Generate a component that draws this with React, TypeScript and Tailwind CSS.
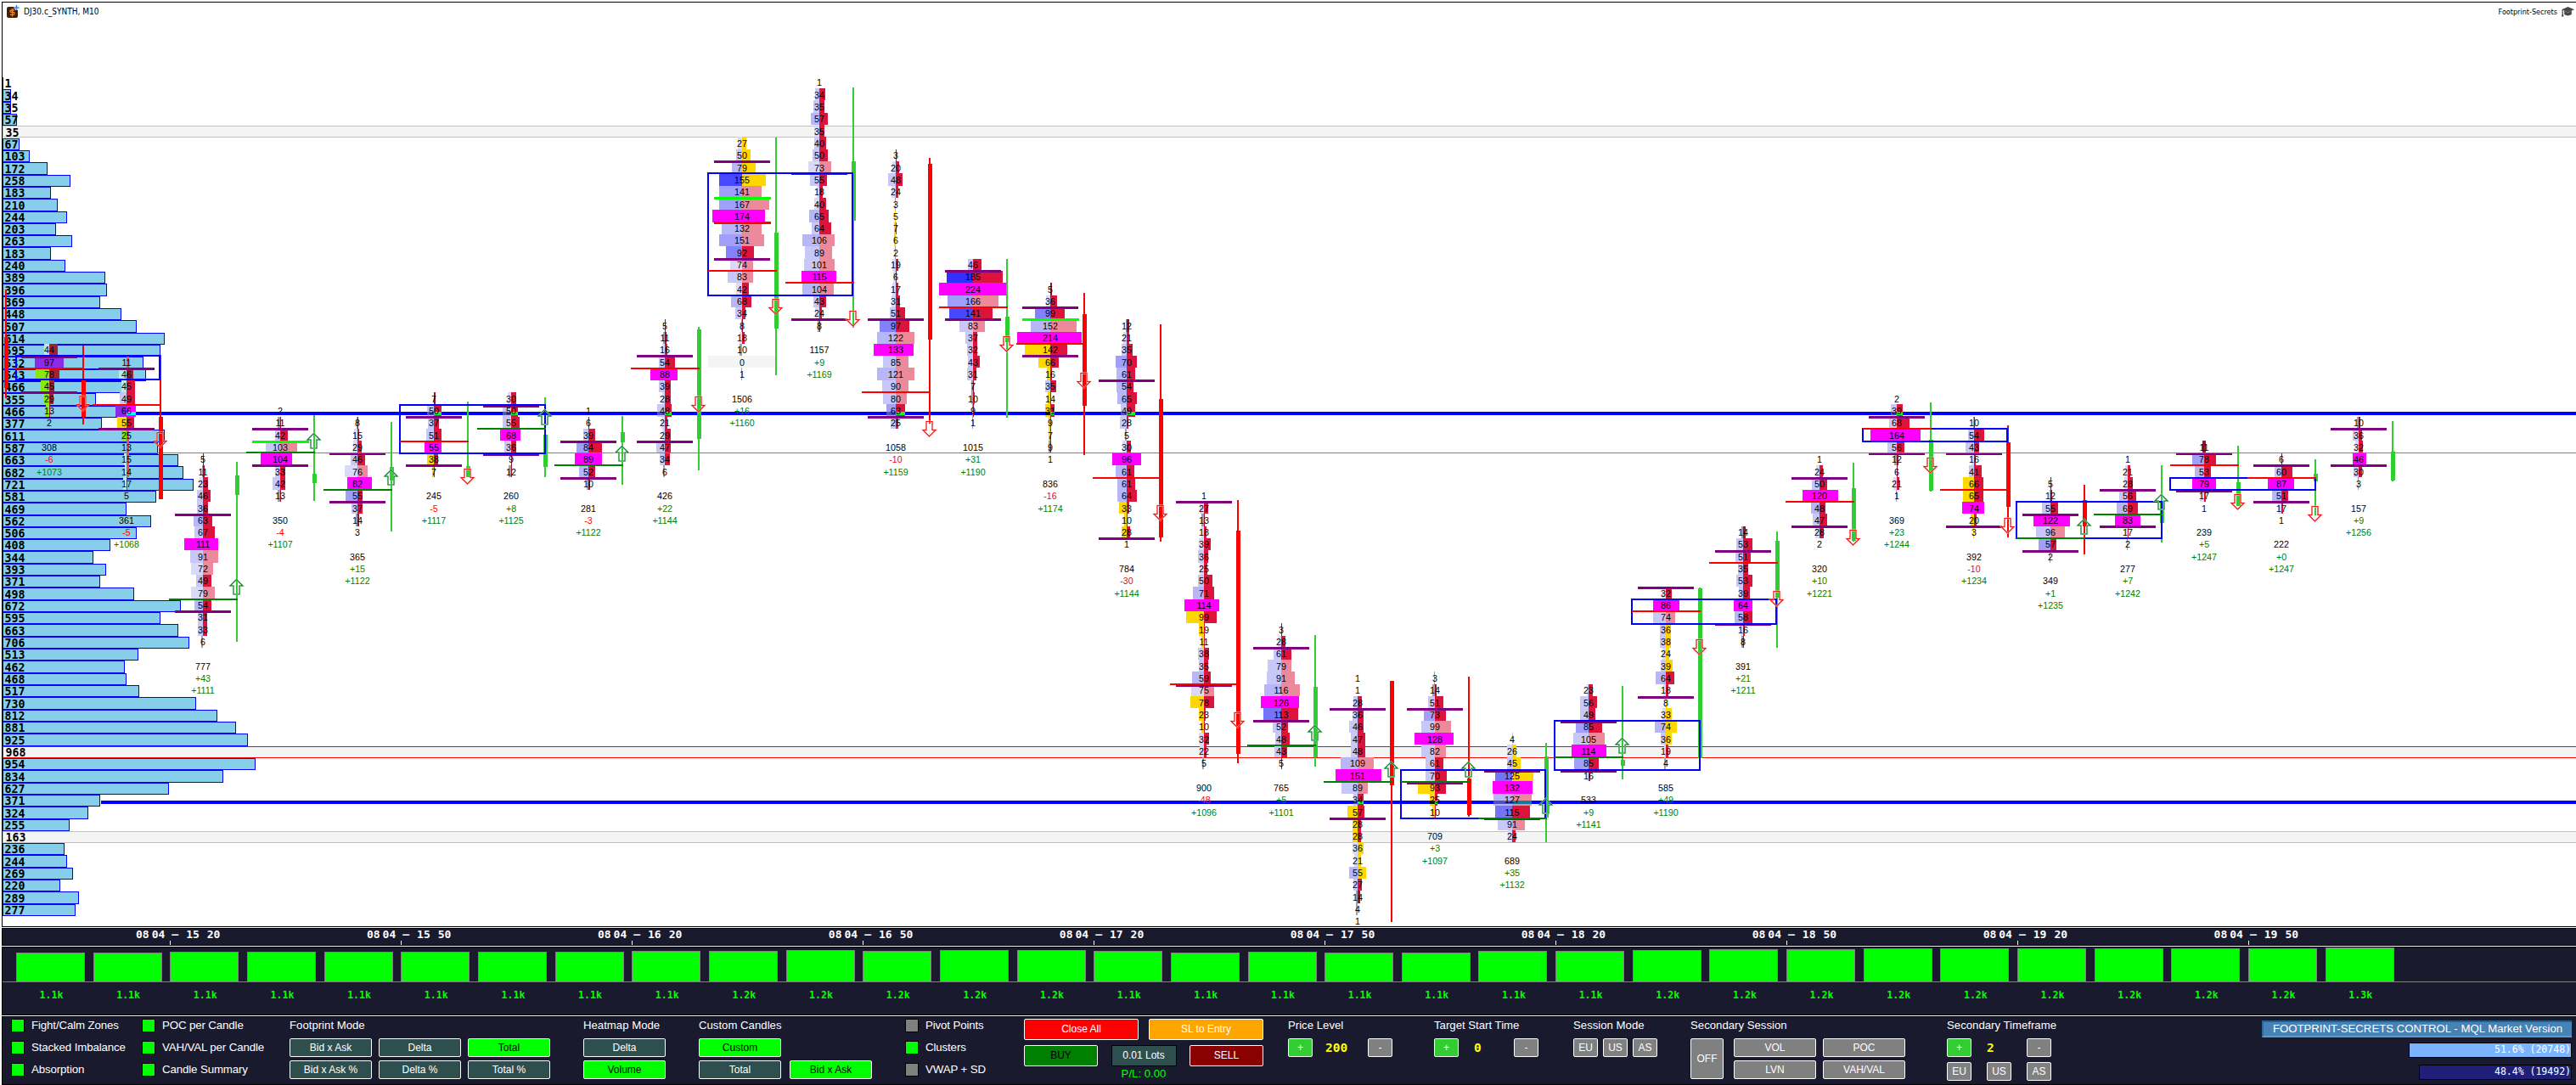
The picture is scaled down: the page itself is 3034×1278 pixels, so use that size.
import React from "react";

const ROW = 14.32;
const rowTop = (i: number) => Math.round(91 + i * ROW);
const cellTop = (i: number) => Math.round(89.8 + i * ROW);
const textY = (i: number) => 101.3 + i * ROW;
const colX = (n: number) => Math.round(58 + n * 90.66);

const PROFILE = [
  1, 34, 35, 57, 35, 67, 103, 172, 258, 183, 210, 244, 203, 263, 183, 240, 389, 396, 369, 448, 507, 614, 595, 532, 543,
  466, 355, 466, 377, 611, 587, 663, 682, 721, 581, 469, 562, 506, 408, 344, 393, 371, 498, 672, 595, 663, 706, 513,
  462, 468, 517, 730, 812, 881, 925, 968, 954, 834, 627, 371, 324, 255, 163, 236, 244, 269, 220, 289, 277,
];

const BANDS: Record<number, string> = { 4: "#c0c0c0", 55: "#ff0000", 62: "#c0c0c0" };

const PALETTE: Record<string, string> = {
  a: "#dadaf8",
  b: "#c8c8f8",
  c: "#b6b6f8",
  d: "#a0a0fa",
  e: "#8282fb",
  f: "#7474fb",
  B: "#4848ff",
  H: "#3030ff",
  g: "#a0a0a8",
  y: "#ffd700",
  r: "#dc143c",
  p: "#ec8a9c",
  k: "#9b1030",
  M: "#ff00ff",
  L: "#86e80f",
  w: "#a02430",
  P: "#8a2be8",
  C: "#b4ece8",
  o: "#ef4a50",
};

type Column = {
  start: number;
  cells: string;
  total: string;
  delta: string;
  cum: string;
  wick: [number, number];
  body: [number, number];
  up: boolean;
  arrow?: [string, number];
  va: number[];
  poc?: [string, number];
  extra?: [string, number][];
};

const COLUMNS: Column[] = [
  { start: 22, cells: "44 6C 10w|97 17P 17P|78 16L 12w|45 10L 6w|29 6L 5w|13 4L 1w|2", total: "308", delta: "-6", cum: "+1073", wick: [407, 500], body: [448, 491], up: false, arrow: ["d", 466], va: [420, 462], poc: ["r", 434] },
  { start: 23, cells: "11 0a 3o|46 9C 8w|45 6C 10r|49 8b 10r|66 13P 11M|55 11y 9r|25 6L 3o|13 0a 3o|15 3C 3o|14 2C 3o|17 4C 1w|5", total: "361", delta: "-5", cum: "+1068", wick: [418, 587], body: [491, 588], up: false, arrow: ["d", 509], va: [434, 505], poc: ["r", 477] },
  { start: 31, cells: "5 0a 1k|11 1g 2k|23 4a 6r|46 7b 9r|36 7b 6r|63 11c 11r|67 10b 14r|111 22M 18M|91 15b 18p|72 14a 12p|49 8b 10r|79 14a 14p|54 10c 10r|31 6b 5r|33 6b 5r|6 2g 0r", total: "777", delta: "+43", cum: "+1111", wick: [544, 756], body: [560, 583], up: true, arrow: ["u", 682], va: [606, 720], poc: ["g", 706] },
  { start: 27, cells: "2|11 3g 1k|42 6b 9r|103 17b 20p|104 23M 14M|33 6b 6r|42 9b 6r|13 3g 1k", total: "350", delta: "-4", cum: "+1107", wick: [489, 590], body: [558, 569], up: true, arrow: ["u", 510], va: [505, 548], poc: ["g", 533], extra: [["#00ff00", 520]] },
  { start: 28, cells: "8 1g 1k|15 4a 2r|29 5a 5r|46 8b 9r|76 15a 12p|82 12M 17M|55 14d 6r|37 7b 6r|14 2g 2k|3", total: "365", delta: "+15", cum: "+1122", wick: [497, 626], body: [550, 566], up: true, arrow: ["u", 553], va: [534, 591], poc: ["g", 577] },
  { start: 26, cells: "7 0a 2k|50 8b 9r|37 7b 6r|51 9b 9r|55 11M 9M|38 8y 5r|7 2y 1r", total: "245", delta: "-5", cum: "+1117", wick: [473, 562], body: [549, 562], up: true, arrow: ["d", 552], va: [491, 548], poc: ["r", 520] },
  { start: 26, cells: "30 4a 6r|50 10b 8r|55 10b 10r|68 13M 11M|36 8b 6r|9 0a 1k|12 3g 1k", total: "260", delta: "+8", cum: "+1125", wick: [468, 562], body: [512, 550], up: true, arrow: ["u", 482], va: [478, 535], poc: ["g", 505] },
  { start: 27, cells: "1|6 0a 1k|39 6b 8r|84 14d 16r|89 16M 16M|52 11c 8r|10 2g 2k", total: "281", delta: "-3", cum: "+1122", wick: [490, 571], body: [509, 521], up: true, arrow: ["u", 525], va: [520, 563], poc: ["g", 548] },
  { start: 20, cells: "5 0a 1k|11 2g 2k|16 3a 3r|54 7b 12r|88 17M 15M|39 7b 7r|28 3a 7r|48 9b 8r|21 4a 3r|29 3a 7r|47 10b 7r|34 6b 6r|6 2g 0r", total: "426", delta: "+22", cum: "+1144", wick: [385, 554], body: [388, 517], up: true, arrow: ["d", 467], va: [419, 520], poc: ["r", 434] },
  { start: 5, cells: "27 5a 5y|50 7b 10y|79 12c 16y|155 27B 28y|141 27d 23p|167 27d 32p|174 35M 27M|132 24c 23p|151 27d 26p|92 19e 14r|74 14a 13p|83 17b 13p|42 7a 8r|68 13c 11r|34 8b 4r|8 1g 1k|18 3a 3r|10 3g 0r|0|1 1g 0r", total: "1506", delta: "+16", cum: "+1160", wick: [162, 442], body: [274, 387], up: true, arrow: ["d", 352], va: [190, 305], poc: ["r", 319], extra: [["#00ff00", 233], ["#ff0000", 262]] },
  { start: 0, cells: "1|34 5b 7r|35 7b 6r|57 10c 10r|35 6a 6r|40 6b 8r|50 8b 10r|73 13a 14p|55 11b 9r|18 3a 4r|40 6a 8r|65 12c 11r|64 9b 14r|106 20c 18p|89 17b 15p|101 18b 18p|115 21M 20M|104 20c 17p|43 7b 8r|24 5a 3r|8 2g 1k", total: "1157", delta: "+9", cum: "+1169", wick: [103, 386], body: [190, 260], up: true, arrow: ["d", 366], va: [204, 376], poc: ["r", 333] },
  { start: 6, cells: "3 0a 1k|20 4a 4r|48 9b 8r|24 5a 3r|3 1g 0r|5 1y 0r|7 2y 1r|6 2y 0r|2 1g 0r|19 4a 3r|6 3a 1k|17 4a 3r|31 5a 5r|51 7b 11r|97 19e 16r|122 22c 22p|133 26M 21M|85 15b 15p|121 22c 22p|90 16b 15p|80 15b 13p|63 11d 11r|25 6b 3r", total: "1058", delta: "-10", cum: "+1159", wick: [186, 499], body: [193, 400], up: false, arrow: ["d", 496], va: [376, 491], poc: ["r", 462] },
  { start: 15, cells: "46 6b 10r|185 31H 35r|224 40M 39M|166 30d 30p|141 28B 23r|83 16b 14p|37 9b 5r|32 7b 5r|43 6b 8r|31 7b 4r|7 2g 1k|10 2g 2r|9 1g 1k|1 1g 0r", total: "1015", delta: "+31", cum: "+1190", wick: [305, 492], body: [373, 403], up: true, arrow: ["d", 396], va: [319, 376], poc: ["r", 362] },
  { start: 17, cells: "5 0a 2k|36 5a 8r|99 18e 17r|152 23c 31p|214 39M 37M|142 30y 20r|66 14y 10r|16 4y 2r|35 6b 7r|14 3y 1k|31 6y 5r|9 2y 1r|7 2y 1k|9 2g 1k|1", total: "836", delta: "-16", cum: "+1174", wick: [345, 536], body: [370, 478], up: false, arrow: ["d", 439], va: [362, 419], poc: ["r", 405], extra: [["#00ff00", 376]] },
  { start: 20, cells: "12 1g 3k|21 4a 3r|35 6b 7r|70 13d 12r|61 12c 10r|54 12c 8r|65 11c 12r|49 7b 10r|28 8b 2r|5 2g 0r|30 5a 5r|96 17M 17M|61 13c 9r|61 11c 10r|64 11c 12r|33 9y 3r|10 3y 1r|28 6y 4r|1", total: "784", delta: "-30", cum: "+1144", wick: [382, 638], body: [470, 633], up: false, arrow: ["d", 595], va: [448, 634], poc: ["r", 563] },
  { start: 34, cells: "1|27 5a 5r|13 3g 1k|18 3a 3r|39 6a 8r|36 7b 5r|25 5a 4r|50 7b 10r|71 13c 12r|114 23M 18M|99 21y 15r|19 6y 1r|11 3y 1r|38 7b 6r|35 6b 5r|59 14c 8r|75 15a 12p|78 16y 12r|23 6y 2r|10 3y 1r|32 6a 6r|22 5a 3r|5 2g 0r", total: "900", delta: "-48", cum: "+1096", wick: [589, 899], body: [625, 888], up: false, arrow: ["d", 839], va: [591, 807], poc: ["r", 806] },
  { start: 45, cells: "3 0a 1k|28 4a 5r|61 9b 12r|79 16b 12p|91 17b 16p|116 20c 22p|126 24M 21M|113 21f 20r|52 10b 8r|48 7b 10r|43 8b 7r|5 0a 1k", total: "765", delta: "+5", cum: "+1101", wick: [748, 903], body: [809, 892], up: true, arrow: ["u", 854], va: [763, 849], poc: ["g", 878] },
  { start: 49, cells: "1|1|28 5b 5r|36 6b 7r|46 10b 7r|47 8b 9r|48 8b 9r|109 20c 19p|151 26M 28M|89 19b 12p|34 5b 7r|57 12y 8r|28 6y 4r|28 6y 4r|36 6a 7y|21 4a 4y|55 10c 10y|27 5b 5r|14 2g 3k|4 2g 0r|1", total: "", delta: "", cum: "", wick: [803, 1086], body: [802, 925], up: false, arrow: ["u", 897], va: [835, 964], poc: ["g", 921] },
  { start: 49, cells: "3 1g 0r|14 3g 2k|51 8b 10r|73 13d 13r|99 16b 19p|128 24M 22M|82 16b 13p|61 11b 10r|70 11b 14r|93 20y 13r|25 6y 3r|10 3y 1r", total: "709", delta: "+3", cum: "+1097", wick: [797, 962], body: [917, 960], up: false, arrow: ["u", 897], va: [835, 922], poc: ["g", 921] },
  { start: 54, cells: "4 0a 1y|26 6a 5y|45 6b 10y|125 20f 25y|132 23M 24M|127 22c 23p|115 20f 21r|91 17b 15p|24 5a 4r", total: "689", delta: "+35", cum: "+1132", wick: [875, 992], body: [891, 963], up: true, arrow: ["u", 940], va: [908, 964], poc: ["g", 964] },
  { start: 50, cells: "23 2a 5r|56 10b 10r|49 10b 8r|85 15d 16r|105 18b 19p|114 20M 21M|85 17d 12r|16 2a 2r", total: "533", delta: "+9", cum: "+1141", wick: [808, 918], body: [895, 902], up: true, arrow: ["u", 869], va: [850, 908], poc: ["g", 892] },
  { start: 42, cells: "32 4a 7r|86 15M 16M|74 15b 11p|36 7b 6y|38 7b 6y|24 4a 4y|39 6b 8y|64 12c 10r|18 3a 3r|8 1a 1y|33 4a 7y|74 13c 13y|36 6b 7y|19 2a 3r|4 2g 0r", total: "585", delta: "+49", cum: "+1190", wick: [692, 893], body: [693, 893], up: true, arrow: ["d", 753], va: [692, 821], poc: ["r", 720] },
  { start: 37, cells: "14 2g 3k|53 8b 11r|51 9b 9r|35 6b 6r|53 8b 11r|39 5b 8r|64 11M 11M|58 10c 11r|16 3a 2r|8 2g 1k", total: "391", delta: "+21", cum: "+1211", wick: [626, 763], body: [637, 704], up: true, arrow: ["d", 696], va: [649, 735], poc: ["r", 663] },
  { start: 31, cells: "1|24 4a 4r|50 9b 9r|120 20M 22M|48 10c 7r|47 8b 9r|28 5a 5r|2", total: "320", delta: "+10", cum: "+1221", wick: [545, 638], body: [575, 637], up: true, arrow: ["d", 624], va: [563, 620], poc: ["r", 591] },
  { start: 26, cells: "2|39 7b 7r|68 9b 15r|164 31M 28M|56 11b 9r|12 3g 2k|6 0a 1k|21 4a 3r|1 1g 0r", total: "369", delta: "+23", cum: "+1244", wick: [474, 579], body: [518, 578], up: true, arrow: ["d", 539], va: [491, 534], poc: ["r", 505] },
  { start: 28, cells: "10 1g 1k|54 7b 12r|43 10b 6r|16 3a 2r|41 6b 9r|66 13y 11r|65 13y 11r|74 14M 12M|20 4y 3r|3 1y 0r", total: "392", delta: "-10", cum: "+1234", wick: [501, 633], body: [521, 597], up: false, arrow: ["d", 610], va: [534, 620], poc: ["r", 577] },
  { start: 33, cells: "5 0a 1k|12 1g 2k|55 10b 9r|122 20M 23M|96 17b 17p|57 14d 7r|2 1g 0r", total: "349", delta: "+1", cum: "+1235", wick: [571, 653], body: [589, 620], up: false, arrow: ["u", 611], va: [606, 649], poc: ["g", 634] },
  { start: 31, cells: "1|21 3a 3r|28 4a 6r|56 10b 10r|69 13c 12r|83 15M 15M|17 3a 1r|2 1g 0r", total: "277", delta: "+7", cum: "+1242", wick: [548, 639], body: [590, 616], up: true, arrow: ["u", 582], va: [577, 620], poc: ["g", 606] },
  { start: 30, cells: "11 2k 2k|78 14d 14r|53 11c 8r|79 14M 14M|17 5a 2r|1", total: "239", delta: "+5", cum: "+1247", wick: [525, 596], body: [568, 596], up: true, arrow: ["d", 582], va: [534, 578], poc: ["r", 548] },
  { start: 31, cells: "6 0a 1k|60 8b 13r|87 16M 15M|51 11c 8r|17 4a 2r|1", total: "222", delta: "+0", cum: "+1247", wick: [541, 607], body: [558, 567], up: true, arrow: ["d", 596], va: [548, 591], poc: ["r", 563] },
  { start: 28, cells: "10 2g 2k|36 7b 4r|32 4a 5r|46 7M 9M|30 6b 4r|3 1g 0r", total: "157", delta: "+9", cum: "+1256", wick: [496, 567], body: [532, 566], up: true, va: [505, 548] },
];

const ZONES: [number, number, number, number][] = [
  [18, 418, 189, 448],
  [470, 476, 643, 535],
  [833, 203, 1005, 349],
  [1649, 906, 1821, 965],
  [1830, 848, 2003, 908],
  [1921, 705, 2093, 736],
  [2193, 504, 2365, 521],
  [2374, 590, 2547, 635],
  [2555, 562, 2728, 578],
];

const SUPPORT: Record<number, number> = { 27: 485, 59: 943 };
const overlayFor = (code: string) => {
  if (code === "r") return "#23eb3c";
  if (code === "p") return "#137a99";
  if (code === "y") return "#1a1a08";
  if (code === "M") return "#00ffff";
  if (code === "w" || code === "k" || code === "g" || code === "P" || code === "L") return "";
  return "#5050c8";
};

const num = "[font-family:'Liberation_Sans',Arial,sans-serif] text-[10.7px]";

function Footprint({ col, n }: { col: Column; n: number }) {
  const c = colX(n);
  const rows = col.cells.split("|").map((s) => s.split(" "));
  const end = col.start + rows.length + 1;
  return (
    <g>
      {rows.map(([v, l, r], k) => {
        const i = col.start + k;
        const y = cellTop(i);
        const h = cellTop(i + 1) - y;
        const lw = l ? parseInt(l) : 0;
        const rw = r ? parseInt(r) : 0;
        const lc = l ? l.slice(-1) : "";
        const rc = r ? r.slice(-1) : "";
        const s = SUPPORT[i];
        return (
          <g key={k}>
            {v === "0" && <rect x={c - 40} y={y} width={79} height={h} fill="#f4f4f4" />}
            {lw > 0 && <rect x={c - lw} y={y} width={lw} height={h} fill={PALETTE[lc]} />}
            {rw > 0 && <rect x={c} y={y} width={rw} height={h} fill={PALETTE[rc]} />}
            {s && lw > 0 && overlayFor(lc) && <rect x={c - lw} y={s} width={lw} height={4} fill={overlayFor(lc)} />}
            {s && rw > 1 && overlayFor(rc) && <rect x={c} y={s} width={rw} height={4} fill={overlayFor(rc)} />}
          </g>
        );
      })}
      <g className={num} textAnchor="middle">
        {rows.map(([v], k) => (
          <text key={k} x={c} y={textY(col.start + k)}>
            {v}
          </text>
        ))}
        <text x={c} y={textY(end)}>
          {col.total}
        </text>
        <text x={c} y={textY(end + 1)} fill={col.delta.startsWith("-") ? "#ff0000" : "#008000"}>
          {col.delta}
        </text>
        <text x={c} y={textY(end + 2)} fill="#008000">
          {col.cum}
        </text>
      </g>
      {col.va.map((y) => (
        <rect key={y} x={c - 33} y={y - 1} width={66} height={3} rx={1} fill="#800080" />
      ))}
      {col.extra?.map(([f, y]) => (
        <rect key={y} x={c - 33} y={y - 1} width={67} height={3} rx={1} fill={f} />
      ))}
    </g>
  );
}

function Candle({ x, wick, body, up }: { x: number; wick: [number, number]; body: [number, number]; up: boolean }) {
  const f = up ? "#32cd32" : "#ff0000";
  return (
    <g fill={f}>
      <rect x={x - 1} y={wick[0]} width={2} height={wick[1] - wick[0]} />
      <rect x={x - 2} y={body[0]} width={5} height={body[1] - body[0]} />
    </g>
  );
}

function Arrow({ x, y, dir }: { x: number; y: number; dir: string }) {
  const d = "M-3.5 .5H3.5V10.5H7.5L0 18L-7.5 10.5H-3.5Z";
  const up = dir === "u";
  return (
    <g transform={up ? `translate(${x} ${y + 18.5}) scale(1 -1)` : `translate(${x} ${y})`} fill="none">
      <path d={d} stroke={up ? "#b8e8d8" : "#ffc8c0"} strokeWidth={1.8} />
      <path d={d} stroke={up ? "#0f7f1a" : "#f01818"} strokeWidth={1.1} />
    </g>
  );
}

function Chart() {
  return (
    <svg viewBox="3 3 3031 1088" width={3031} height={1088} shapeRendering="crispEdges" className="absolute left-0 top-0">
      {Object.entries(BANDS).map(([k, s]) => {
        const i = Number(k);
        return <rect key={k} x={3.5} y={rowTop(i) + 0.5} width={3040} height={13} fill="#f4f4f4" stroke={s} />;
      })}
      {PROFILE.map((v, i) => {
        if (BANDS[i]) return null;
        const w = Math.max(1, Math.round(v * 0.313 - 0.7));
        const h = rowTop(i + 1) - rowTop(i);
        if (w < 3) return <rect key={i} x={3} y={rowTop(i)} width={1} height={h} fill="#0000ff" />;
        return <rect key={i} x={3.5} y={rowTop(i) + 0.5} width={w - 1} height={h - 1} fill="#87ceeb" stroke="#0000ff" />;
      })}
      <g className="text-[13.2px] font-bold [font-family:'DejaVu_Sans_Mono','Liberation_Mono',monospace]">
        {PROFILE.map((v, i) => (
          <text key={i} x={BANDS[i] ? 6.5 : 5.5} y={103.3 + i * 14.32}>
            {v}
          </text>
        ))}
      </g>
      <rect x={158} y={485} width={2876} height={4} fill="#0000ff" />
      <rect x={119} y={943} width={2915} height={4} fill="#0000ff" />
      <rect x={52} y={405} width={6} height={3} fill="#1d3ff0" />
      <rect x={58} y={405} width={10} height={3} fill="#22dd55" />
      {COLUMNS.map((c, n) => (
        <Footprint key={n} col={c} n={n} />
      ))}
      <rect x={3} y={533} width={3031} height={1} fill="#808080" />
      <Candle x={7} wick={[341, 469]} body={[397, 457]} up={false} />
      {COLUMNS.map((c, n) => (
        <Candle key={n} x={colX(n) + 40} wick={c.wick} body={c.body} up={c.up} />
      ))}
      {ZONES.map(([a, b, c, d]) => (
        <rect key={a} x={a + 1} y={b + 1} width={c - a - 2} height={d - b - 2} fill="none" stroke="#0000ff" strokeWidth={2} />
      ))}
      {COLUMNS.map((c, n) =>
        c.poc ? (
          <rect key={n} x={colX(n) - 40} y={c.poc[1] - 1} width={81} height={2} fill={c.poc[0] === "r" ? "#ff0000" : "#008000"} />
        ) : null
      )}
      <g shapeRendering="auto">
        {COLUMNS.map((c, n) => (c.arrow ? <Arrow key={n} x={colX(n) + 39.5} y={c.arrow[1]} dir={c.arrow[0]} /> : null))}
      </g>
    </svg>
  );
}

function TimeAxis() {
  const times = ["15 20", "15 50", "16 20", "16 50", "17 20", "17 50", "18 20", "18 50", "19 20", "19 50"];
  return (
    <div className="ml-[2px] flex h-[21px] shrink-0 border-y border-l border-black bg-[#1a1a2e] pl-[157px] text-[13px] font-bold text-white [font-family:'DejaVu_Sans_Mono',monospace]">
      {times.map((t) => {
        const [h, m] = t.split(" ");
        return (
          <div key={t} className="flex h-[19px] w-[271.96px] shrink-0 flex-col justify-between">
            <div className="flex h-[14px] items-center leading-[14px]">
              <span>08</span>
              <span className="ml-[3px]">04</span>
              <span className="ml-[8px]">–</span>
              <span className="ml-[9px]">{h}</span>
              <span className="ml-[9px]">{m}</span>
            </div>
            <div className="ml-[40px] h-[5px] w-px bg-white" />
          </div>
        );
      })}
    </div>
  );
}

const VOL = [35, 35, 36, 36, 36, 36, 36, 36, 37, 37, 38, 37, 38, 38, 37, 35, 36, 35, 35, 37, 37, 38, 39, 39, 40, 40, 40, 40, 40, 40, 41];

function VolumePanel() {
  const label = (i: number) => (i === 30 ? "1.3k" : (i > 8 && i < 14) || i > 20 ? "1.2k" : "1.1k");
  return (
    <div className="ml-[2px] h-[81px] shrink-0 border-y border-l border-black bg-[#1a1a2e]">
      <div className="flex h-[41px] items-end border-b border-[#808080] pl-[16px]">
        {VOL.map((h, i) => (
          <div key={i} className="w-[90.66px] shrink-0">
            <div className="w-[81px] border-x border-t border-[#808080] bg-[#00ff00]" style={{ height: h - 1 }} />
          </div>
        ))}
      </div>
      <div className="flex pl-[16px] pt-[7px] text-[11.6px] font-bold leading-[16px] text-[#00ff00] [font-family:'DejaVu_Sans_Mono',monospace]">
        {VOL.map((_, i) => (
          <div key={i} className="w-[90.66px] shrink-0 pl-[27.5px]">
            {label(i)}
          </div>
        ))}
      </div>
    </div>
  );
}

function Check({ on = true, children }: { on?: boolean; children: React.ReactNode }) {
  return (
    <div className="flex h-[16px] items-center gap-2">
      <span className={on ? "h-[16px] w-[16px] border border-black bg-[#00ff00]" : "h-[16px] w-[16px] border border-black bg-[#808080]"} />
      <span className="whitespace-nowrap text-[13.33px] leading-[16px] tracking-[-0.15px]">{children}</span>
    </div>
  );
}

const TONES: Record<string, string> = {
  slate: "bg-[#2f4f4f] border-white text-white",
  lime: "bg-[#00ff00] border-white text-black",
  gray: "bg-[#808080] border-white text-white",
  green: "bg-[#32cd32] border-white text-white",
  red: "bg-[#ff0000] border-white text-white",
  orange: "bg-[#ffa500] border-white text-white",
  buy: "bg-[#008000] border-white text-black",
  sell: "bg-[#8b0000] border-white text-white",
  lots: "bg-[#2f4f4f] border-black text-white",
};

function Btn({ tone = "slate", size = "h-[22px] w-[97px]", children }: { tone?: string; size?: string; children: React.ReactNode }) {
  return (
    <button className={`flex shrink-0 items-center justify-center whitespace-nowrap rounded-[2px] border pb-px text-[12px] leading-none ${TONES[tone]} ${size}`}>
      {children}
    </button>
  );
}

function Group({ w, title, children }: { w: string; title: string; children: React.ReactNode }) {
  return (
    <div className={`${w} shrink-0`}>
      <div className="mb-[6px] h-[19px] whitespace-nowrap text-[13.2px] leading-[19px]">{title}</div>
      {children}
    </div>
  );
}

function Stepper({ value, mid, pad = "" }: { value: string; mid: string; pad?: string }) {
  return (
    <div className="flex items-center">
      <Btn tone="green" size="h-[22px] w-[29px]">+</Btn>
      <span className={`${mid} ${pad} shrink-0 text-[14.5px] font-bold leading-none text-[#ffff00] [font-family:'DejaVu_Sans_Mono',monospace]`}>{value}</span>
      <Btn tone="gray" size="h-[22px] w-[29px]">-</Btn>
    </div>
  );
}

function Controls() {
  const sq = "h-[22px] w-[29px]";
  return (
    <div className="ml-[2px] flex h-[81px] shrink-0 border-y border-l border-black bg-[#1a1a2e] pl-[10px] text-white [font-family:'Liberation_Sans',Arial,sans-serif]">
      <div className="flex w-[154px] shrink-0 flex-col gap-[10px] pt-[2px]">
        <Check>Fight/Calm Zones</Check>
        <Check>Stacked Imbalance</Check>
        <Check>Absorption</Check>
      </div>
      <div className="flex w-[174px] shrink-0 flex-col gap-[10px] pt-[2px]">
        <Check>POC per Candle</Check>
        <Check>VAH/VAL per Candle</Check>
        <Check>Candle Summary</Check>
      </div>
      <Group w="w-[346px]" title="Footprint Mode">
        <div className="grid grid-cols-[97px_97px_97px] gap-x-[8px] gap-y-[4px]">
          <Btn>Bid x Ask</Btn>
          <Btn>Delta</Btn>
          <Btn tone="lime">Total</Btn>
          <Btn>Bid x Ask %</Btn>
          <Btn>Delta %</Btn>
          <Btn>Total %</Btn>
        </div>
      </Group>
      <Group w="w-[136px]" title="Heatmap Mode">
        <div className="grid gap-[4px]">
          <Btn>Delta</Btn>
          <Btn tone="lime">Volume</Btn>
        </div>
      </Group>
      <Group w="w-[243px]" title="Custom Candles">
        <div className="grid grid-cols-[97px_97px] gap-x-[10px] gap-y-[4px]">
          <Btn tone="lime">Custom</Btn>
          <span />
          <Btn>Total</Btn>
          <Btn tone="lime">Bid x Ask</Btn>
        </div>
      </Group>
      <div className="flex w-[140px] shrink-0 flex-col gap-[10px] pt-[2px]">
        <Check on={false}>Pivot Points</Check>
        <Check>Clusters</Check>
        <Check on={false}>VWAP + SD</Check>
      </div>
      <div className="w-[311px] shrink-0 pt-[2px]">
        <div className="w-[282px]">
          <div className="flex justify-between">
            <Btn tone="red" size="h-[25px] w-[135px]">Close All</Btn>
            <Btn tone="orange" size="h-[25px] w-[135px]">SL to Entry</Btn>
          </div>
          <div className="mt-[6px] flex justify-between">
            <Btn tone="buy" size="h-[25px] w-[87px]">BUY</Btn>
            <Btn tone="lots" size="h-[25px] w-[77px] rounded-none">0.01 Lots</Btn>
            <Btn tone="sell" size="h-[25px] w-[87px]">SELL</Btn>
          </div>
          <div className="mt-px text-center text-[13.2px] leading-[16px] text-[#00ff00]">P/L: 0.00</div>
        </div>
      </div>
      <Group w="w-[172px]" title="Price Level">
        <Stepper value="200" mid="w-[65px]" pad="pl-[15px]" />
      </Group>
      <Group w="w-[164px]" title="Target Start Time">
        <Stepper value="0" mid="w-[65px]" pad="pl-[18px]" />
      </Group>
      <Group w="w-[138px]" title="Session Mode">
        <div className="flex gap-[6px]">
          <Btn tone="gray" size={sq}>EU</Btn>
          <Btn tone="gray" size={sq}>US</Btn>
          <Btn tone="gray" size={sq}>AS</Btn>
        </div>
      </Group>
      <Group w="w-[302px]" title="Secondary Session">
        <div className="flex gap-[12px]">
          <Btn tone="gray" size="h-[48px] w-[39px]">OFF</Btn>
          <div className="grid grid-cols-[97px_97px] gap-x-[8px] gap-y-[4px]">
            <Btn tone="gray">VOL</Btn>
            <Btn tone="gray">POC</Btn>
            <Btn tone="gray">LVN</Btn>
            <Btn tone="gray">VAH/VAL</Btn>
          </div>
        </div>
      </Group>
      <Group w="w-[371px]" title="Secondary Timeframe">
        <Stepper value="2" mid="w-[65px]" pad="pl-[18px]" />
        <div className="mt-[6px] flex gap-[18px]">
          <Btn tone="gray" size={sq}>EU</Btn>
          <Btn tone="gray" size={sq}>US</Btn>
          <Btn tone="gray" size={sq}>AS</Btn>
        </div>
      </Group>
      <div className="flex w-[365px] shrink-0 flex-col items-end pt-[4px]">
        <div className="flex h-[20px] w-full items-center justify-center whitespace-nowrap border-b-2 border-l-2 border-t-2 border-b-[#5a9bd5] border-l-[#2c6a98] border-t-[#25608e] bg-[#4682b4] text-[13.2px] leading-none">
          FOOTPRINT-SECRETS CONTROL - MQL Market Version
        </div>
        <div className="mt-[6px] flex h-[18px] w-[192px] items-center justify-end border border-black bg-[#7ab4ff] text-[11.5px] leading-none [font-family:'DejaVu_Sans_Mono',monospace]">
          51.6% (20748)
        </div>
        <div className="mt-[8px] flex h-[18px] w-[180px] items-center justify-end border border-black bg-[#1f1f7a] text-[11.5px] leading-none [font-family:'DejaVu_Sans_Mono',monospace]">
          48.4% (19492)
        </div>
      </div>
    </div>
  );
}

export default function App() {
  return (
    <div className="flex h-[1278px] w-full flex-col gap-px overflow-hidden bg-white">
      <div className="relative ml-[2px] mt-[2px] h-[1090px] shrink-0 overflow-hidden border-y border-l border-black">
        <Chart />
        <div className="flex h-[22px] items-center justify-between pl-[5px] text-black [font-family:'DejaVu_Sans_Condensed','DejaVu_Sans',sans-serif]">
          <div className="flex items-center gap-[6px]">
            <svg width="14" height="16" viewBox="0 0 14 16" className="overflow-visible">
              <rect x="0" y="2" width="13" height="13" rx="2" fill="#3d220a" />
              <path d="M9 6H5.2Q4 6 4 7.2T5.2 8.4H7.8Q9 8.4 9 9.8T7.8 11.3H3.8M6.5 4V13.5" fill="none" stroke="#f0842c" strokeWidth="1.3" />
              <path d="M11.5 0V6M8.5 3H14.5" stroke="#fff" strokeWidth="3" />
              <path d="M11.5 0V6M8.5 3H14.5" stroke="#2f86f6" strokeWidth="1.5" />
            </svg>
            <span className="whitespace-nowrap text-[10px] leading-none">DJ30.c_SYNTH, M10</span>
          </div>
          <div className="flex items-center gap-[5px] pr-[2px]">
            <span className="whitespace-nowrap text-[9px] leading-none">Footprint-Secrets</span>
            <svg width="15" height="12" viewBox="0 0 15 12" fill="#484848">
              <path d="M7.5 0L15 3.2L7.5 6.4L0 3.2Z" />
              <path d="M3.2 4.6V9Q7.5 11.8 11.8 9V4.6L7.5 6.8Z" />
              <path d="M.6 3.4H1.8V8L2.6 11.5H0L.6 8Z" />
            </svg>
          </div>
        </div>
      </div>
      <TimeAxis />
      <VolumePanel />
      <Controls />
    </div>
  );
}
